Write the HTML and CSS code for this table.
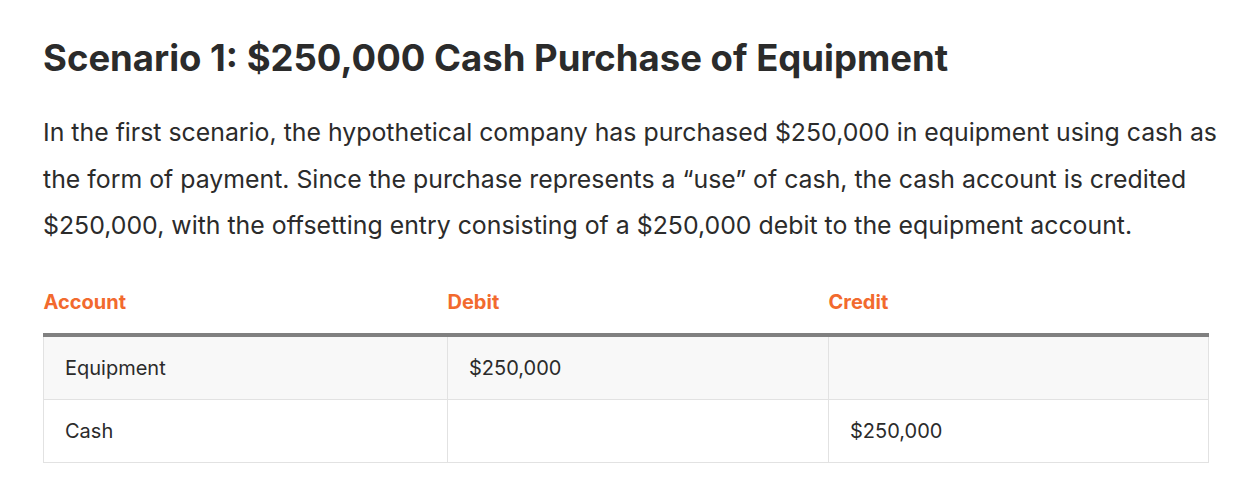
FILE: index.html
```html
<!DOCTYPE html>
<html>
<head>
<meta charset="utf-8">
<link rel="stylesheet" href="styles.css">
</head>
<body>
<main class="article">
  <h2 class="title">Scenario 1: $250,000 Cash Purchase of Equipment</h2>
  <p class="text">In the first scenario, the hypothetical company has purchased $250,000 in equipment using cash as the form of payment. Since the purchase represents a “use” of cash, the cash account is credited $250,000, with the offsetting entry consisting of a $250,000 debit to the equipment account.</p>
  <table class="ledger">
    <thead>
      <tr><th class="c1">Account</th><th class="c2">Debit</th><th class="c3">Credit</th></tr>
    </thead>
    <tbody>
      <tr class="odd"><td>Equipment</td><td>$250,000</td><td></td></tr>
      <tr><td>Cash</td><td></td><td>$250,000</td></tr>
    </tbody>
  </table>
</main>
</body>
</html>
```
FILE: styles.css
```css
html, body { margin: 0; padding: 0; background: #fff; }
body { font-family: Inter, "Noto Sans", sans-serif; color: #2b2b2b; }
.article { padding: 34px 0 0 43px; width: 1190px; }
.title { margin: 0; font-size: 36.5px; font-weight: 700; line-height: 48px; color: #2b2b2b; }
.text { margin: 27px 0 0; font-size: 24.85px; line-height: 46.5px; color: #2b2b2b; }
.ledger { margin-top: 41px; width: 1166px; border-collapse: collapse; font-size: 20px; }
.ledger th { text-align: left; color: #f26a2e; font-weight: 700; padding: 0 0 19px 0; border-bottom: 4px solid #808080; font-size: 20px; line-height: 24px; }
.ledger .c1 { width: 404px; }
.ledger .c2 { width: 381px; }
.ledger td { border: 1px solid #e2e2e2; padding: 0 21px; height: 62px; color: #2b2b2b; }
.ledger tr.odd td { background: #f8f8f8; }
```
